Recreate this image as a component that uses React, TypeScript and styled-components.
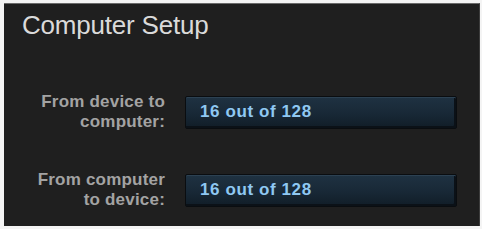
import * as React from 'react';
import styled, { createGlobalStyle } from 'styled-components';

const GlobalStyle = createGlobalStyle`
	html, body {
		margin: 0;
		padding: 0;
		background: #ffffff;
	}
	body {
		font-family: 'Liberation Sans', Arial, sans-serif;
	}
`;

const Frame = styled.div({
	width: '482px',
	height: '229px',
	boxSizing: 'border-box',
	padding: '3px 2px 3px 4px',
	background: '#f4f4f4',
});

const Panel = styled.div({
	height: '100%',
	boxSizing: 'border-box',
	background: '#1f1f1f',
	borderTop: '1px solid #6a6a6a',
	borderRight: '1px solid #3c3c3c',
	display: 'flex',
	flexDirection: 'column',
	padding: '6px 22px 0 18px',
});

const Title = styled.h1({
	margin: 0,
	fontSize: '26px',
	fontWeight: 'normal',
	color: '#dadada',
	letterSpacing: '-0.2px',
	lineHeight: '30px',
});

const Rows = styled.div({
	display: 'flex',
	flexDirection: 'column',
	gap: '38px',
	marginTop: '52px',
});

const Row = styled.div({
	display: 'flex',
	alignItems: 'center',
	gap: '20px',
	height: '40px',
});

const Label = styled.div({
	width: '143px',
	textAlign: 'right',
	fontSize: '17px',
	fontWeight: 'bold',
	lineHeight: '20px',
	color: '#a3a3a3',
	letterSpacing: '0.2px',
});

const Field = styled.div({
	flex: 1,
	height: '33px',
	boxSizing: 'border-box',
	display: 'flex',
	alignItems: 'center',
	padding: '0 14px',
	border: '1px solid #0a0d10',
	borderRadius: '2px',
	background: 'linear-gradient(180deg, #1f3242 0%, #182836 55%, #111d27 100%)',
	boxShadow: 'inset 0 1px 0 #2c4152, inset -2px -2px 0 #0b1117',
	fontSize: '17px',
	fontWeight: 'bold',
	color: '#8fc8f2',
	letterSpacing: '0.6px',
});

const rows = [
	{ label: ['From device to', 'computer:'], value: '16 out of 128' },
	{ label: ['From computer', 'to device:'], value: '16 out of 128' },
];

const App: React.FC = () => {
	return (
		<>
			<GlobalStyle />
			<Frame>
				<Panel>
					<Title>Computer Setup</Title>
					<Rows>
						{rows.map((r, i) => (
							<Row key={i}>
								<Label>
									{r.label[0]}
									<br />
									{r.label[1]}
								</Label>
								<Field>{r.value}</Field>
							</Row>
						))}
					</Rows>
				</Panel>
			</Frame>
		</>
	);
};

export default App;
